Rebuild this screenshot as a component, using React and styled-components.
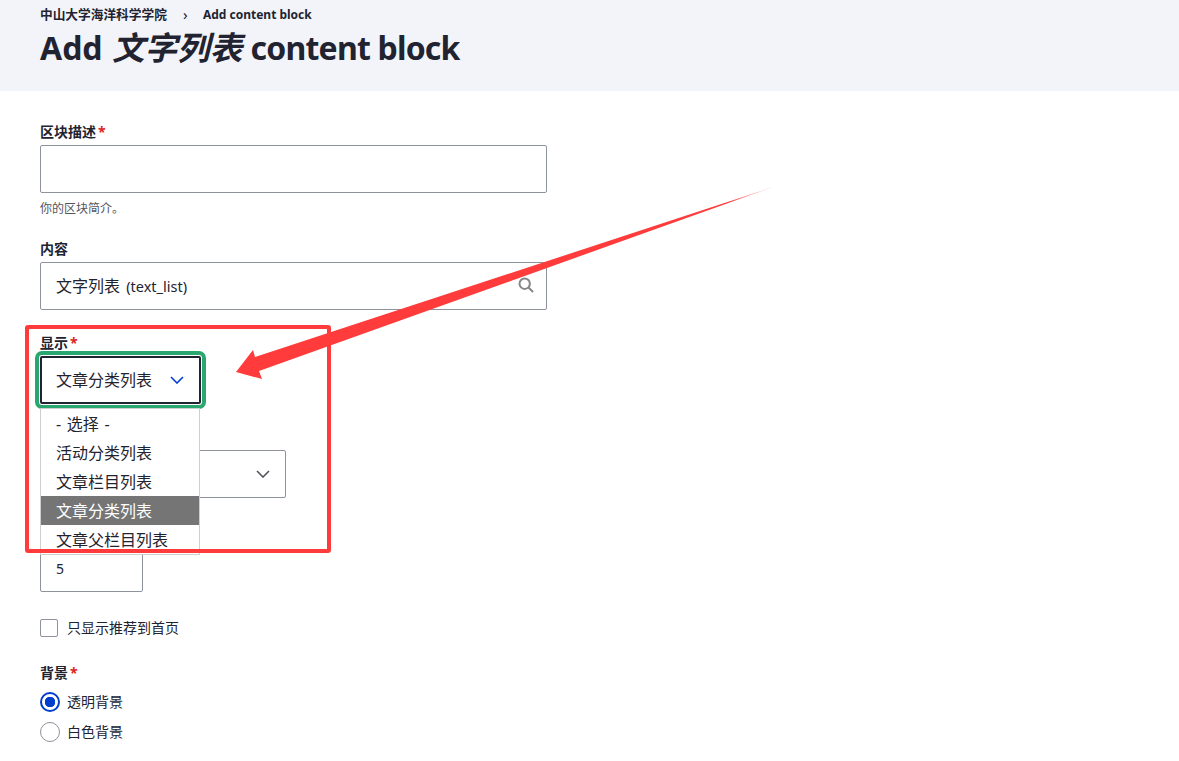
import * as React from 'react';
import styled, { createGlobalStyle } from 'styled-components';

const GlobalStyle = createGlobalStyle`
  html, body {
    margin: 0;
    background: #fff;
    overflow: hidden;
  }
  body {
    font-family: "Noto Sans", "Noto Sans CJK SC", sans-serif;
    color: #222330;
  }
`;

const OPTIONS = ['- 选择 -', '活动分类列表', '文章栏目列表', '文章分类列表', '文章父栏目列表'];

const Chevron = ({ color, className }) => (
  <svg className={className} width="14" height="8" viewBox="0 0 14 8" fill="none">
    <path d="M1 1l6 6 6-6" stroke={color} strokeWidth="1.6" />
  </svg>
);

const SearchIcon = () => (
  <svg width="16" height="16" viewBox="0 0 16 16" fill="none">
    <circle cx="6.7" cy="6.7" r="5.2" stroke="#868686" strokeWidth="2" />
    <path d="M10.5 10.5l4.5 4.5" stroke="#868686" strokeWidth="2" />
  </svg>
);

const App = () => (
  <Page>
    <GlobalStyle />
    <Header>
      <Breadcrumb>
        <CrumbCjk>中山大学海洋科学学院</CrumbCjk>
        <Separator>›</Separator>
        <span>Add content block</span>
      </Breadcrumb>
      <Title>
        Add <em>文字列表</em> <TitleLatin>content block</TitleLatin>
      </Title>
    </Header>

    <Form>
      <Field>
        <Label>区块描述<Star>*</Star></Label>
        <Input />
        <Help>你的区块简介。</Help>
      </Field>

      <Field>
        <Label>内容</Label>
        <Input>
          <InputText>文字列表 <small>(text_list)</small></InputText>
          <InputIcon><SearchIcon /></InputIcon>
        </Input>
      </Field>

      <Field>
        <Label>显示<Star>*</Star></Label>
        <SelectWrap>
          <FocusedSelect>
            <InputText>文章分类列表</InputText>
            <Chevron color="#003ecc" />
          </FocusedSelect>
          <Dropdown>
            {OPTIONS.map((option, i) => (
              <Option key={option} $selected={i === 3}>{option}</Option>
            ))}
          </Dropdown>
        </SelectWrap>
      </Field>

      <Field>
        <Label>&nbsp;</Label>
        <CoveredSelect>
          <Chevron color="#55565b" />
        </CoveredSelect>
      </Field>

      <Field>
        <Label>&nbsp;</Label>
        <NumberInput>5</NumberInput>
      </Field>

      <CheckRow>
        <Checkbox />
        <CheckLabel>只显示推荐到首页</CheckLabel>
      </CheckRow>

      <Field>
        <Label>背景<Star>*</Star></Label>
        <RadioGroup>
          <RadioRow>
            <Radio $checked />
            <CheckLabel>透明背景</CheckLabel>
          </RadioRow>
          <RadioRow>
            <Radio />
            <CheckLabel>白色背景</CheckLabel>
          </RadioRow>
        </RadioGroup>
      </Field>
    </Form>

    <RedFrame />
    <Arrow width="1179" height="761" viewBox="0 0 1179 761">
      <defs>
        <linearGradient id="tail" gradientUnits="userSpaceOnUse" x1="725" y1="203" x2="776" y2="186">
          <stop offset="0" stopColor="#ff3b3b" />
          <stop offset="1" stopColor="#ff3b3b" stopOpacity="0.15" />
        </linearGradient>
      </defs>
      <polygon
        points="236,372 253,350 255,357 776,186 259,371 262,379"
        fill="url(#tail)"
      />
    </Arrow>
  </Page>
);

const Page = styled.div`
  position: relative;
  width: 1179px;
  height: 761px;
  overflow: hidden;
`;

const Header = styled.header`
  height: 91px;
  box-sizing: border-box;
  padding: 6px 40px 0;
  background: #f3f4f9;
`;

const Breadcrumb = styled.div`
  display: flex;
  align-items: center;
  height: 17px;
  font-size: 12px;
  font-weight: 700;
  line-height: 17px;
`;

const CrumbCjk = styled.span`
  font-size: 12.7px;
`;

const Separator = styled.span`
  width: 36px;
  padding-left: 1px;
  box-sizing: border-box;
  text-align: center;
  font-size: 15px;
  font-weight: 400;
`;

const Title = styled.h1`
  margin: 5px 0 0;
  font-size: 32px;
  font-weight: 700;
  line-height: 40px;
  white-space: pre-wrap;

  em {
    font-size: 32.6px;
    font-style: italic;
    margin-left: 1px;
  }
`;

const TitleLatin = styled.span`
  letter-spacing: -0.8px;
`;

const Form = styled.main`
  display: flex;
  flex-direction: column;
  gap: 24px;
  padding: 32px 40px 0;
`;

const Field = styled.div`
  display: flex;
  flex-direction: column;
  align-items: flex-start;
`;

const Label = styled.label`
  display: block;
  height: 18px;
  margin-bottom: 4px;
  font-size: 14px;
  font-weight: 700;
  line-height: 17px;
`;

const Star = styled.span`
  margin-left: 2px;
  color: #dc2323;
`;

const Input = styled.div`
  position: relative;
  display: flex;
  align-items: center;
  width: 507px;
  height: 48px;
  box-sizing: border-box;
  padding: 0 15px;
  border: 1px solid #8e929c;
  border-radius: 2px;
  background: #fff;
`;

const InputText = styled.span`
  margin-top: -2px;
  font-size: 16px;

  small {
    margin-left: 2px;
    font-size: 14.5px;
  }
`;

const InputIcon = styled.span`
  position: absolute;
  right: 12px;
  top: 14px;
  line-height: 0;
`;

const Help = styled.div`
  margin-top: 8px;
  font-size: 12px;
  line-height: 15px;
  color: #55565b;
`;

const SelectWrap = styled.div`
  position: relative;
`;

const FocusedSelect = styled.div`
  display: flex;
  align-items: center;
  justify-content: space-between;
  width: 161px;
  height: 48px;
  box-sizing: border-box;
  padding: 0 15px 0 14px;
  border: 2px solid #222330;
  border-radius: 2px;
  outline: 4px solid #2aa66f;
  outline-offset: 1px;
`;

const Dropdown = styled.ul`
  position: absolute;
  left: 0;
  top: 52px;
  z-index: 2;
  width: 160px;
  box-sizing: border-box;
  margin: 0;
  padding: 0;
  list-style: none;
  border: 1px solid #cfcfcf;
  background: #fff;
`;

const Option = styled.li`
  height: 29px;
  padding-left: 15px;
  font-size: 16px;
  line-height: 31px;
  word-spacing: 1.5px;
  color: ${(props) => (props.$selected ? '#fff' : '#222330')};
  background: ${(props) => (props.$selected ? '#757575' : 'transparent')};
`;

const CoveredSelect = styled.div`
  display: flex;
  align-items: center;
  justify-content: flex-end;
  width: 246px;
  height: 48px;
  box-sizing: border-box;
  padding-right: 15px;
  border: 1px solid #8e929c;
  border-radius: 2px;
`;

const NumberInput = styled.div`
  display: flex;
  align-items: center;
  width: 103px;
  height: 48px;
  box-sizing: border-box;
  padding-left: 15px;
  border: 1px solid #8e929c;
  border-radius: 2px;
  font-size: 14px;
`;

const CheckRow = styled.div`
  display: flex;
  align-items: center;
  height: 20px;
  margin: 2px 0;

  span:last-child {
    line-height: 22px;
  }
`;

const Checkbox = styled.span`
  width: 18px;
  height: 18px;
  box-sizing: border-box;
  margin-right: 9px;
  border: 1px solid #8e929c;
  border-radius: 2px;
`;

const CheckLabel = styled.span`
  font-size: 14px;
  line-height: 20px;
`;

const RadioGroup = styled.div`
  display: flex;
  flex-direction: column;
  gap: 10px;
  margin-top: 6px;
`;

const RadioRow = styled.div`
  display: flex;
  align-items: center;
  gap: 7px;
  height: 20px;
`;

const Radio = styled.span`
  width: 20px;
  height: 20px;
  box-sizing: border-box;
  border-radius: 50%;
  border: ${(props) => (props.$checked ? '2px solid #003ecc' : '1px solid #8e929c')};
  background: ${(props) =>
    props.$checked ? 'radial-gradient(circle, #003ecc 0 5px, #fff 5.5px)' : '#fff'};
`;

const RedFrame = styled.div`
  position: absolute;
  left: 25px;
  top: 325px;
  z-index: 3;
  width: 306px;
  height: 228px;
  box-sizing: border-box;
  border: 4px solid #ff3b3b;
  border-radius: 3px;
`;

const Arrow = styled.svg`
  position: absolute;
  left: 0;
  top: 0;
  z-index: 4;
  pointer-events: none;
`;

export default App;
